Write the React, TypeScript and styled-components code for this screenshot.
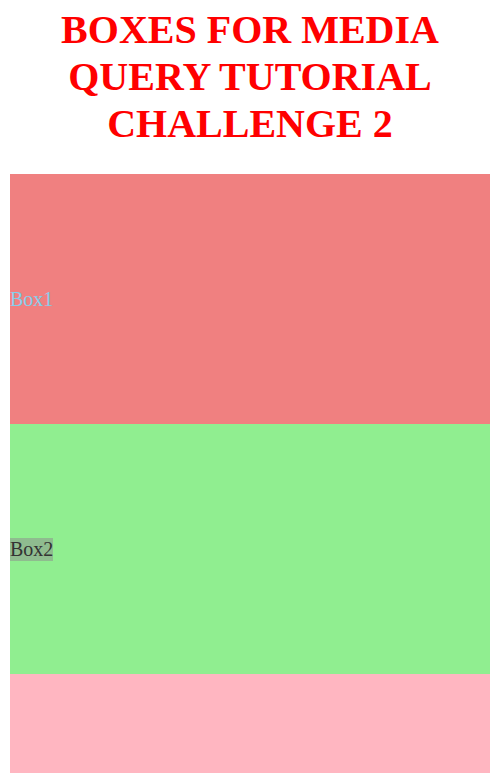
import styled, { createGlobalStyle } from "styled-components";

const GlobalStyle = createGlobalStyle`
  body {
    margin: 0;
    font-family: "Liberation Serif", "Times New Roman", serif;
    font-size: 20px;
    background: #fff;
  }
`;

const Page = styled.div`
  width: 480px;
  margin-left: 10px;
  padding-top: 6px;
`;

const Title = styled.h1`
  margin: 0 0 27px;
  font-size: 40px;
  font-weight: bold;
  text-align: center;
  color: red;
`;

const Box = styled.div<{ $bg: string; $h: number }>`
  display: flex;
  align-items: center;
  height: ${(p) => p.$h}px;
  background-color: ${(p) => p.$bg};
`;

const Label = styled.span<{ $color: string; $bg?: string }>`
  color: ${(p) => p.$color};
  background-color: ${(p) => p.$bg ?? "transparent"};
`;

export default function App() {
  return (
    <>
      <GlobalStyle />
      <Page>
        <Title>BOXES FOR MEDIA QUERY TUTORIAL CHALLENGE 2</Title>
        <Box $bg="lightcoral" $h={250}>
          <Label $color="skyblue">Box1</Label>
        </Box>
        <Box $bg="lightgreen" $h={250}>
          <Label $color="#333" $bg="darkseagreen">
            Box2
          </Label>
        </Box>
        <Box $bg="lightpink" $h={250} />
      </Page>
    </>
  );
}
